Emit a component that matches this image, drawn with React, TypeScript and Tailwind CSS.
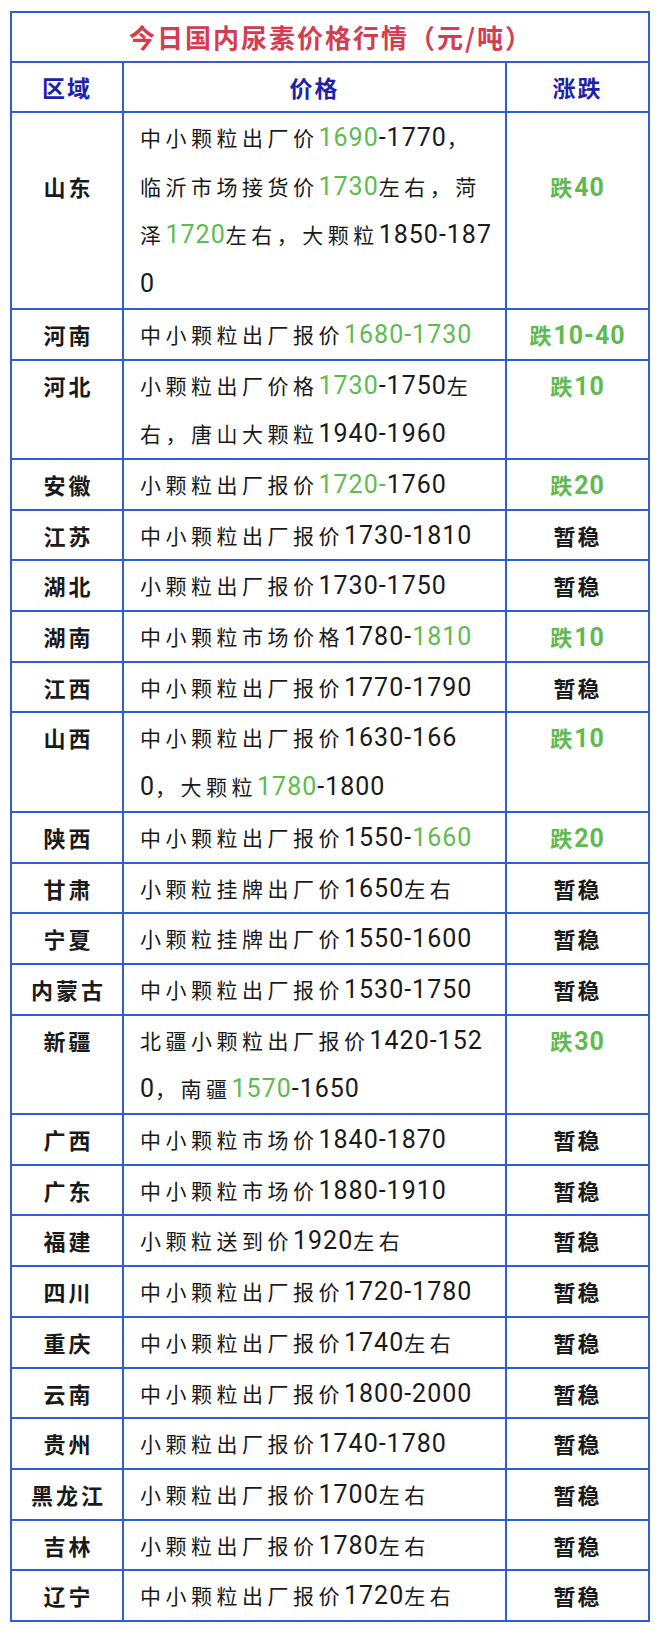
import React from "react";

type Row = {
  region: string;
  lines: string[];
  change: string;
  offset?: boolean;
};

// {…} marks the green part of a price line
const rows: Row[] = [
  {
    region: "山东",
    lines: [
      "中小颗粒出厂价{1690}-1770，",
      "临沂市场接货价{1730}左右，菏",
      "泽{1720}左右，大颗粒1850-187",
      "0",
    ],
    change: "跌40",
    offset: true,
  },
  { region: "河南", lines: ["中小颗粒出厂报价{1680-1730}"], change: "跌10-40" },
  {
    region: "河北",
    lines: ["小颗粒出厂价格{1730}-1750左", "右，唐山大颗粒1940-1960"],
    change: "跌10",
  },
  { region: "安徽", lines: ["小颗粒出厂报价{1720-}1760"], change: "跌20" },
  { region: "江苏", lines: ["中小颗粒出厂报价1730-1810"], change: "暂稳" },
  { region: "湖北", lines: ["小颗粒出厂报价1730-1750"], change: "暂稳" },
  { region: "湖南", lines: ["中小颗粒市场价格1780-{1810}"], change: "跌10" },
  { region: "江西", lines: ["中小颗粒出厂报价1770-1790"], change: "暂稳" },
  {
    region: "山西",
    lines: ["中小颗粒出厂报价1630-166", "0，大颗粒{1780}-1800"],
    change: "跌10",
  },
  { region: "陕西", lines: ["中小颗粒出厂报价1550-{1660}"], change: "跌20" },
  { region: "甘肃", lines: ["小颗粒挂牌出厂价1650左右"], change: "暂稳" },
  { region: "宁夏", lines: ["小颗粒挂牌出厂价1550-1600"], change: "暂稳" },
  { region: "内蒙古", lines: ["中小颗粒出厂报价1530-1750"], change: "暂稳" },
  {
    region: "新疆",
    lines: ["北疆小颗粒出厂报价1420-152", "0，南疆{1570}-1650"],
    change: "跌30",
  },
  { region: "广西", lines: ["中小颗粒市场价1840-1870"], change: "暂稳" },
  { region: "广东", lines: ["中小颗粒市场价1880-1910"], change: "暂稳" },
  { region: "福建", lines: ["小颗粒送到价1920左右"], change: "暂稳" },
  { region: "四川", lines: ["中小颗粒出厂报价1720-1780"], change: "暂稳" },
  { region: "重庆", lines: ["中小颗粒出厂报价1740左右"], change: "暂稳" },
  { region: "云南", lines: ["中小颗粒出厂报价1800-2000"], change: "暂稳" },
  { region: "贵州", lines: ["小颗粒出厂报价1740-1780"], change: "暂稳" },
  { region: "黑龙江", lines: ["小颗粒出厂报价1700左右"], change: "暂稳" },
  { region: "吉林", lines: ["小颗粒出厂报价1780左右"], change: "暂稳" },
  { region: "辽宁", lines: ["中小颗粒出厂报价1720左右"], change: "暂稳" },
];

const cell = "border-2 border-[#2f5ed4] p-0";

// latin runs get a rounder face and a bigger size than the CJK text
function Mixed({ text }: { text: string }) {
  const runs = text.split(/([\x21-\x7e]+)/).filter(Boolean);
  return (
    <>
      {runs.map((r, i) =>
        /^[\x21-\x7e]+$/.test(r) ? (
          <span
            key={i}
            className="font-['Roboto','Noto_Sans_CJK_SC',sans-serif] text-[25px] tracking-[1px] leading-none"
          >
            {r}
          </span>
        ) : (
          <span key={i}>{r}</span>
        )
      )}
    </>
  );
}

function PriceLine({ text }: { text: string }) {
  const parts = text.split(/(\{[^}]*\})/).filter(Boolean);
  return (
    <div className="whitespace-nowrap">
      {parts.map((p, i) => {
        const green = p.startsWith("{");
        return (
          <span key={i} className={green ? "text-[#5fbb4f]" : undefined}>
            <Mixed text={green ? p.slice(1, -1) : p} />
          </span>
        );
      })}
    </div>
  );
}

export default function App() {
  return (
    <div className="min-h-screen bg-white pt-[11px] pl-[10px] font-['Noto_Sans_CJK_SC',sans-serif] text-[#1a1a1a]">
      <table className="table-fixed border-collapse w-[640px]">
        <colgroup>
          <col className="w-[112px]" />
          <col className="w-[383px]" />
          <col className="w-[143px]" />
        </colgroup>
        <thead>
          <tr>
            <td
              colSpan={3}
              className={`${cell} text-center font-bold text-[26px] tracking-[2px] pl-[2px] leading-[48px] text-[#d43d4f]`}
            >
              今日国内尿素价格行情（元/吨）
            </td>
          </tr>
          <tr className="text-[#1e22aa] font-bold text-[23px] tracking-[2px] leading-[48px] text-center">
            <td className={cell}>区域</td>
            <td className={cell}>价格</td>
            <td className={cell}>涨跌</td>
          </tr>
        </thead>
        <tbody className="leading-[48.7px]">
          {rows.map((row) => {
            const drop = row.change.startsWith("跌");
            return (
              <tr key={row.region}>
                <td
                  className={`${cell} align-top text-center font-bold text-[22px] tracking-[3px] pl-[3px]`}
                >
                  <div className={row.offset ? "pt-[48.7px]" : ""}>{row.region}</div>
                </td>
                <td className={`${cell} align-top pl-[16px] text-[21px] tracking-[4.5px]`}>
                  {row.lines.map((l, i) => (
                    <PriceLine key={i} text={l} />
                  ))}
                </td>
                <td
                  className={`${cell} align-top text-center font-bold text-[22px] tracking-[2px] ${
                    drop ? "text-[#5fbb4f]" : "text-[#1a1a1a]"
                  }`}
                >
                  <div className={row.offset ? "pt-[48.7px]" : ""}>
                    <Mixed text={row.change} />
                  </div>
                </td>
              </tr>
            );
          })}
        </tbody>
      </table>
    </div>
  );
}
